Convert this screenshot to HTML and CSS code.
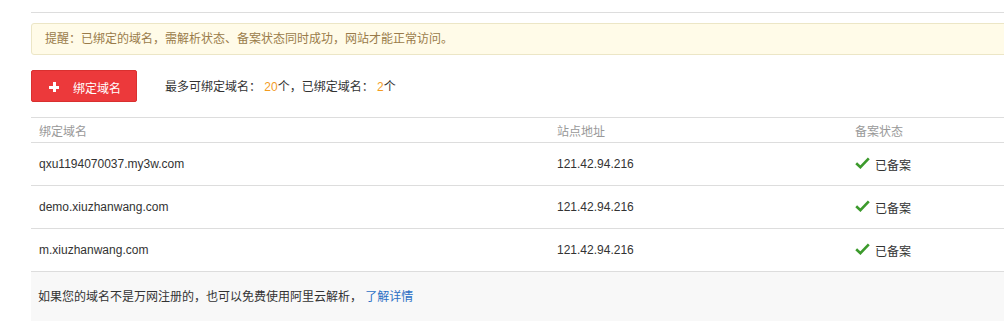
FILE: index.html
```html
<!DOCTYPE html>
<html lang="zh">
<head>
<meta charset="utf-8">
<link rel="stylesheet" href="styles.css">
</head>
<body>
<div class="page">
  <div class="topline"></div>
  <div class="notice">提醒：已绑定的域名，需解析状态、备案状态同时成功，网站才能正常访问。</div>
  <div class="toolbar">
    <button class="btn-add"><span class="plus"></span><span class="btn-text">绑定域名</span></button>
    <div class="quota">最多可绑定域名： <span class="num">20</span>个，已绑定域名： <span class="num">2</span>个</div>
  </div>
  <div class="table">
    <div class="row head">
      <div class="c1">绑定域名</div>
      <div class="c2">站点地址</div>
      <div class="c3">备案状态</div>
    </div>
    <div class="row">
      <div class="c1">qxu1194070037.my3w.com</div>
      <div class="c2">121.42.94.216</div>
      <div class="c3"><svg class="check" viewBox="0 0 15 12" width="15" height="12"><path d="M1.2 6.2 L5.4 10.2 L13.8 1.4" fill="none" stroke="#3c9a2c" stroke-width="2.6"/></svg>已备案</div>
    </div>
    <div class="row">
      <div class="c1">demo.xiuzhanwang.com</div>
      <div class="c2">121.42.94.216</div>
      <div class="c3"><svg class="check" viewBox="0 0 15 12" width="15" height="12"><path d="M1.2 6.2 L5.4 10.2 L13.8 1.4" fill="none" stroke="#3c9a2c" stroke-width="2.6"/></svg>已备案</div>
    </div>
    <div class="row">
      <div class="c1">m.xiuzhanwang.com</div>
      <div class="c2">121.42.94.216</div>
      <div class="c3"><svg class="check" viewBox="0 0 15 12" width="15" height="12"><path d="M1.2 6.2 L5.4 10.2 L13.8 1.4" fill="none" stroke="#3c9a2c" stroke-width="2.6"/></svg>已备案</div>
    </div>
  </div>
  <div class="footer">如果您的域名不是万网注册的，也可以免费使用阿里云解析， <a class="link" href="#">了解详情</a></div>
</div>
</body>
</html>
```
FILE: styles.css
```css
html, body {
  margin: 0;
  padding: 0;
  background: #fff;
  overflow: hidden;
}
body {
  font-family: "Liberation Sans", "Noto Sans CJK SC", sans-serif;
  font-size: 12px;
  color: #333;
}
.page {
  margin-left: 31px;
  width: 1000px;
}
.topline {
  height: 12px;
  border-bottom: 1px solid #dddddd;
}
.notice {
  margin-top: 10px;
  height: 30px;
  line-height: 30px;
  padding-left: 13px;
  background: #fffbe8;
  border: 1px solid #ece6c6;
  border-radius: 3px;
  color: #9a7b4a;
}
.toolbar {
  display: flex;
  align-items: center;
  margin-top: 15px;
  height: 32px;
}
.btn-add {
  display: flex;
  align-items: center;
  width: 106px;
  height: 32px;
  padding: 0 0 0 17px;
  border: 1px solid #d9302f;
  border-radius: 2px;
  background: #ec393b;
  color: #fff;
  font-family: inherit;
  font-size: 12px;
  cursor: pointer;
}
.plus {
  position: relative;
  width: 10px;
  height: 10px;
  margin-top: 2px;
}
.plus::before, .plus::after {
  content: "";
  position: absolute;
  background: #fff;
}
.plus::before {
  left: 0;
  top: 4px;
  width: 10px;
  height: 3px;
}
.plus::after {
  left: 3.5px;
  top: 0;
  width: 3px;
  height: 10px;
}
.btn-text {
  margin-left: 14px;
  margin-top: 3px;
}
.quota {
  margin-left: 28px;
  margin-top: -2px;
  color: #333;
}
.num {
  color: #f39c1f;
}
.table {
  margin-top: 15px;
  border-top: 1px solid #dddddd;
}
.row {
  display: flex;
  align-items: center;
  height: 42px;
  border-bottom: 1px solid #dddddd;
}
.row.head {
  height: 24px;
  color: #999;
}
.c1 {
  width: 518px;
  padding-left: 8px;
}
.c2 {
  width: 298px;
}
.c3 {
  display: flex;
  align-items: center;
}
.check {
  margin-right: 5px;
  margin-top: -3px;
}
.footer {
  height: 49px;
  line-height: 50px;
  padding-left: 7px;
  background: #f8f8f8;
  color: #333;
}
.link {
  color: #2b6fc4;
  text-decoration: none;
}
```
